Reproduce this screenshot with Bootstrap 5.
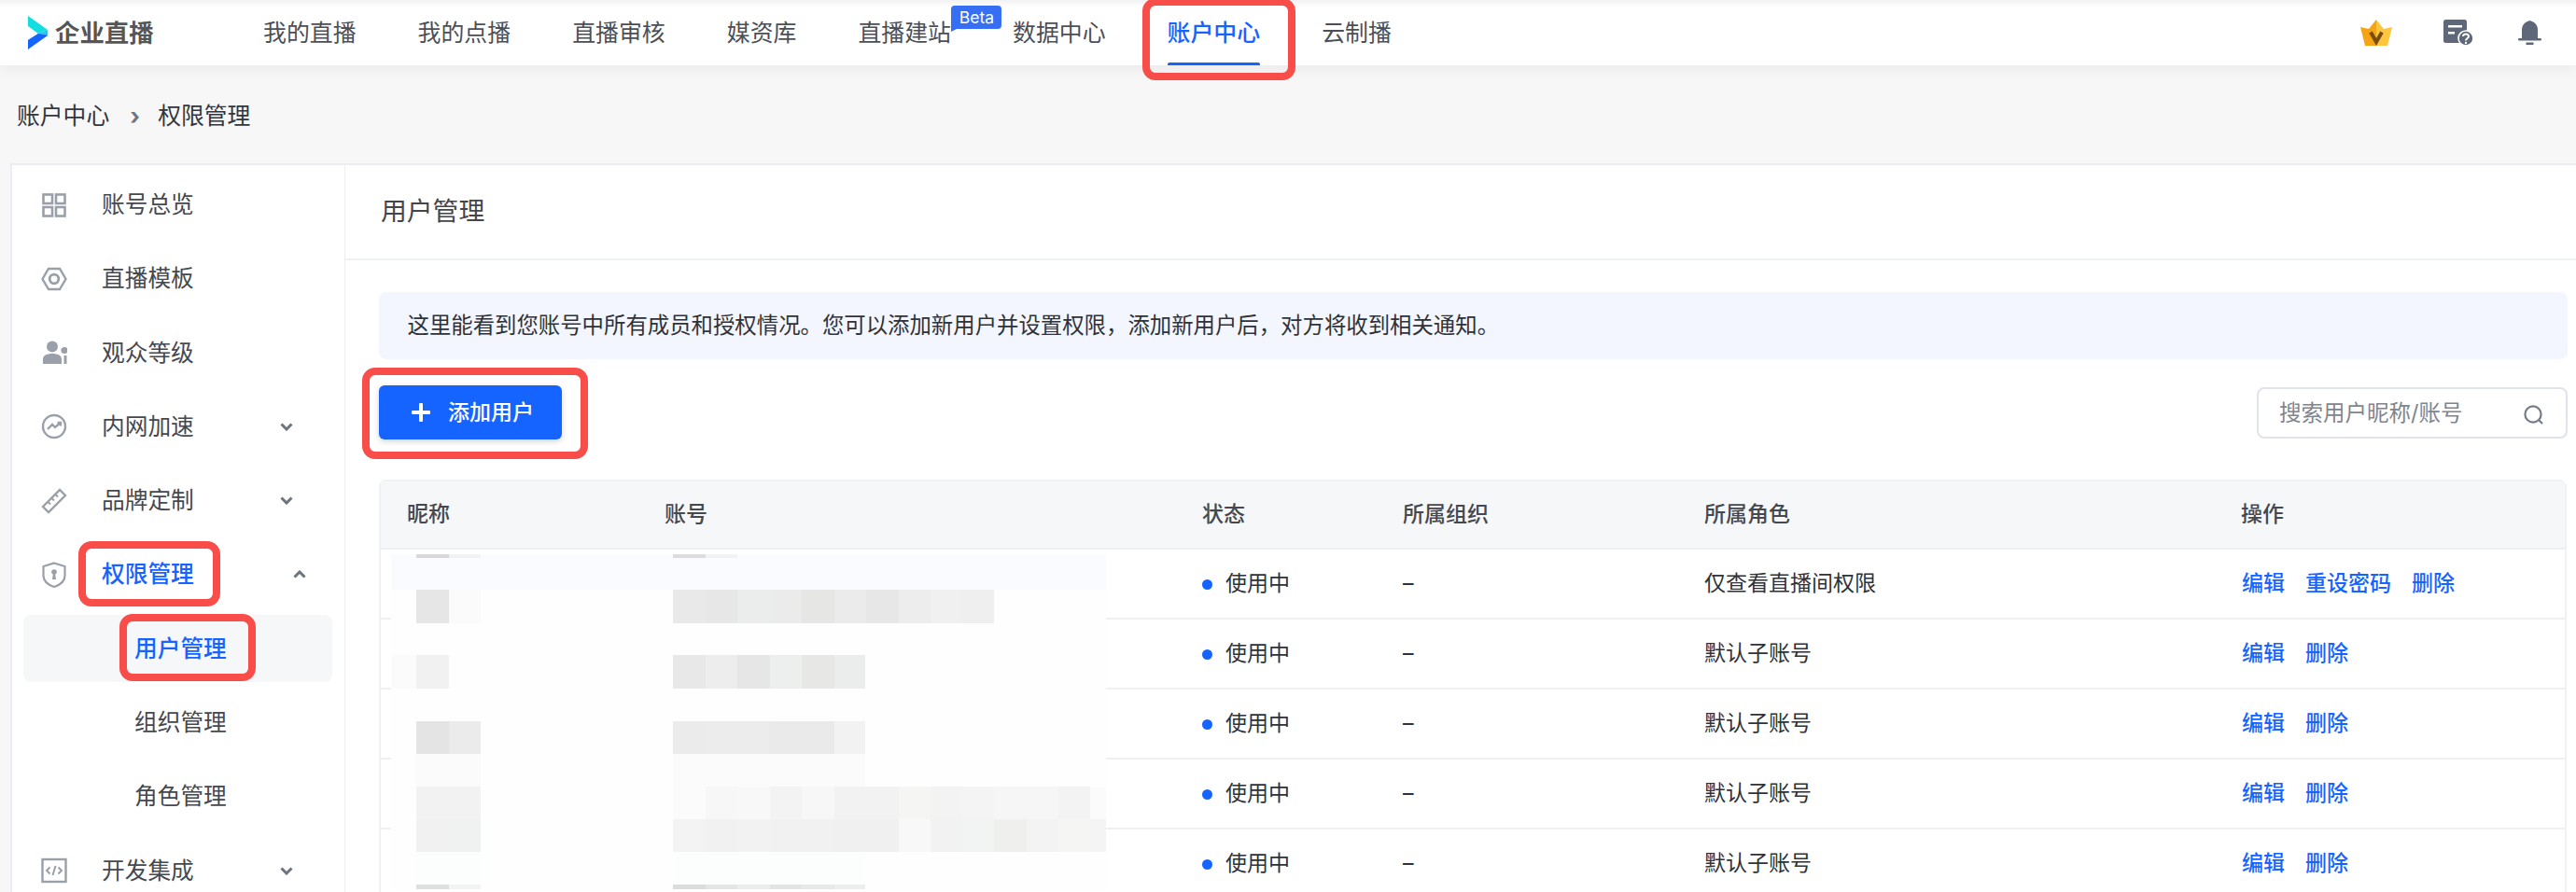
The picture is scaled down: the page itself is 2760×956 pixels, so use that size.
<!doctype html>
<html lang="zh-CN">
<head>
<meta charset="utf-8">
<title>用户管理</title>
<link rel="stylesheet" href="https://cdn.jsdelivr.net/npm/bootstrap@5.3.0/dist/css/bootstrap.min.css">
<style>
html,body{height:956px;overflow:hidden}
body{background:#f7f7f8;font-family:Inter,"Noto Sans CJK SC",sans-serif;color:#3d4046;position:relative}
.topbar{height:70px;background:linear-gradient(#f2f2f2 0,#fff 8px);box-shadow:0 4px 14px rgba(0,0,0,.06);flex-wrap:nowrap;justify-content:flex-start;z-index:2;position:relative}
.brand-box{margin:0 0 0 30px;padding:0;gap:8px;width:252px;font-size:26.4px;font-weight:700;color:#565656;line-height:1}
.top-nav{gap:66px;flex-wrap:nowrap}
.top-link{position:relative;padding:0;font-size:24.9px;line-height:70px;height:70px;color:#4c4f55;white-space:nowrap}
.top-link.on{color:#1664ff;font-weight:500}
.top-link.on::after{content:"";position:absolute;left:0;right:0;bottom:0;height:3px;background:#1664ff;border-radius:2px 2px 0 0}
.beta-tag{position:absolute;left:100px;top:6px;width:54px;height:25px;background:#366ef4;color:#fff;font-size:17.5px;line-height:25px;text-align:center;border-radius:4px 4px 4px 0}
.beta-tag::after{content:"";position:absolute;left:0;top:25px;border-top:3px solid #366ef4;border-right:6px solid transparent}
.top-tools{margin-left:auto;padding-right:37px;gap:48px}
.crown-ico{margin-right:7px}
.crumb-bar{height:105px;padding:4px 0 0 18px;font-size:24.8px}
.crumb-list{margin:0;--bs-breadcrumb-item-padding-x:22px;--bs-breadcrumb-divider-color:#6f7580;--bs-breadcrumb-item-active-color:#33363c;color:#33363c}
.crumb-list .breadcrumb-item+.breadcrumb-item::before{width:8px;padding-right:0;margin-right:22px;font-weight:700}
.shell{height:781px;padding-left:11px}
.side-panel{width:360px;flex:none;background:#fff;border:2px solid #ebecf5;border-bottom:0;padding-top:6.500px;gap:7.300px;flex-wrap:nowrap}
.side-link{height:72px;width:331px;margin-left:12px;padding:0 42px 0 20px;font-size:24.7px;color:#45484e;border-radius:8px;display:flex;align-items:center;flex:none;text-decoration:none}
.side-ico{width:28px;height:28px;flex:none;margin-right:37.500px;margin-left:-1.500px}
.side-chev{margin-left:auto}
.side-link.open{color:#1664ff;font-weight:500;padding-right:28px}
.side-sub{padding-left:119px}
.side-sub.on{background:#f6f7f9;color:#1664ff;font-weight:500}
.main-panel{background:#fff;border-top:2px solid #ebecf5;min-width:0;margin-left:-1px}
.page-head{height:102px;padding-left:38px;border-bottom:2px solid #edf0f7;font-size:27.8px;color:#43464b;font-weight:400;margin:0;display:flex;align-items:center}
.page-body{padding:34px 9px 0 36px}
.tip-box{height:72px;padding:0 0 0 30.500px;margin:0 0 28px;background:#f3f6fe;border:0;border-radius:8px;font-size:23.4px;color:#2f3237;display:flex;align-items:center}
.tool-row{height:58px;margin-bottom:43px}
.add-btn{width:196px;height:58px;padding:0 0 0 35px;background:#1664ff;border:0;border-radius:6px;color:#fff;font-size:23px;font-weight:500;box-shadow:0 2px 6px rgba(0,0,0,.18);display:flex;align-items:center;gap:19px}
.search-box{width:333px;height:55px}
.search-input{height:55px;padding:0 60px 0 22px;border:2px solid #e0e3e9;border-radius:8px;font-size:23.5px;color:#333}
.search-input::placeholder{color:#80858e;opacity:1}
.search-ico{position:absolute;right:25px;top:19px}
.table-wrap{border:2px solid #eff1f4;border-bottom:0;border-radius:8px 8px 0 0;position:relative;width:2344px}
.user-table{--bs-table-bg:transparent;margin:0;table-layout:fixed;width:2340px;font-size:23px;color:#2f3237}
.user-table th{height:72px;padding:0;vertical-align:middle;background:#f6f7f9;font-weight:500;color:#45484e;border-bottom:2px solid #eceef2}
.user-table td{height:75px;padding:0;vertical-align:middle;border-bottom:2px solid #eef0f5}
.user-table .first-col{padding-left:28px}
.w-nick{width:304px}.w-acct{width:576px}.w-state{width:215px}.w-org{width:323px}.w-role{width:575px}.w-act{width:347px}
.dot-on{display:inline-block;width:11px;height:11px;border-radius:50%;background:#1664ff;margin-right:14px;vertical-align:1px}
.act-row{gap:22px;padding-left:1px}
.act-row a{color:#1664ff;font-weight:500;text-decoration:none}
.mosaic{position:absolute;left:11px;top:78px;width:766px;height:359px;filter:blur(.5px)}
.anno{position:absolute;border:8px solid #f94d4a;border-radius:14px;z-index:5;pointer-events:none}
.anno-nav{left:1224px;top:-2px;width:164px;height:88px}
.anno-side{left:84px;top:580px;width:152px;height:70px}
.anno-sub{left:128px;top:658px;width:146px;height:72px}
.anno-add{left:388px;top:394px;width:242px;height:98px}
</style>
</head>
<body>
<nav class="navbar topbar p-0">
  <a class="navbar-brand brand-box d-flex align-items-center" href="#">
    <svg width="21" height="36" viewBox="0 0 21 36"><path d="M0 0 21 15 11 19 0 11Z" fill="#12dde0"/><path d="M21 15V21L6 30 0 26 11 19Z" fill="#38bdf0"/><path d="M0 36V26L11 19 21 21Z" fill="#1664ff"/></svg>
    <span>企业直播</span>
  </a>
  <ul class="nav top-nav">
    <li class="nav-item"><a class="nav-link top-link" href="#">我的直播</a></li>
    <li class="nav-item"><a class="nav-link top-link" href="#">我的点播</a></li>
    <li class="nav-item"><a class="nav-link top-link" href="#">直播审核</a></li>
    <li class="nav-item"><a class="nav-link top-link" href="#">媒资库</a></li>
    <li class="nav-item"><a class="nav-link top-link" href="#">直播建站<span class="beta-tag">Beta</span></a></li>
    <li class="nav-item"><a class="nav-link top-link" href="#">数据中心</a></li>
    <li class="nav-item"><a class="nav-link top-link on" href="#">账户中心</a></li>
    <li class="nav-item"><a class="nav-link top-link" href="#">云制播</a></li>
  </ul>
  <div class="top-tools d-flex align-items-center">
    <svg class="crown-ico" width="34" height="28" viewBox="0 0 34 28"><path d="M17 0 9 10 0 8 5 28H17Z" fill="#f5a415"/><path d="M17 0 25 10 34 8 29 28H17Z" fill="#fdc63f"/><path d="M11 13.500 17 24 23 13.500" fill="none" stroke="#7a4d10" stroke-width="4"/></svg>
    <svg width="32" height="28" viewBox="0 0 32 28"><rect width="25" height="25" rx="2.500" fill="#5e6878"/><rect x="5" y="6" width="15" height="2.500" fill="#fff"/><rect x="5" y="13" width="7" height="2.500" fill="#fff"/><circle cx="24" cy="20" r="8" fill="#5e6878" stroke="#fff" stroke-width="1.600"/><path d="M21 18C21 14.500 27 14.500 27 18 27 20 24 20 24 22.500" fill="none" stroke="#fff" stroke-width="2"/><circle cx="24" cy="25" r="1.200" fill="#fff"/></svg>
    <svg width="25" height="26" viewBox="0 0 25 26"><path d="M12.500 0C7 1.500 4 5 4 10V19H21V10C21 5 18 1.500 12.500 0Z" fill="#5e6878"/><rect y="19" width="25" height="2.500" rx="1.200" fill="#5e6878"/><rect x="8.500" y="23.500" width="8" height="2.500" fill="#5e6878"/></svg>
  </div>
</nav>

<div class="crumb-bar d-flex align-items-center">
  <ol class="breadcrumb crumb-list" style="--bs-breadcrumb-divider:'›'">
    <li class="breadcrumb-item">账户中心</li>
    <li class="breadcrumb-item active">权限管理</li>
  </ol>
</div>

<div class="shell d-flex">
  <aside class="side-panel nav flex-column">
    <a class="side-link" href="#"><svg class="side-ico" viewBox="0 0 28 28" fill="none" stroke="#9aa0a9" stroke-width="2.600"><rect x="2.500" y="2.500" width="9.500" height="9.500"/><rect x="16" y="2.500" width="9.500" height="9.500"/><rect x="2.500" y="16" width="9.500" height="9.500"/><rect x="16" y="16" width="9.500" height="9.500"/></svg>账号总览</a>
    <a class="side-link" href="#"><svg class="side-ico" viewBox="0 0 28 28" fill="none" stroke="#9aa0a9" stroke-width="2.400"><path d="M1.500 14 8 3H20L26.500 14 20 25H8Z"/><circle cx="14" cy="14" r="4.800" stroke-width="2.800"/></svg>直播模板</a>
    <a class="side-link" href="#"><svg class="side-ico" viewBox="0 0 28 28" fill="#9aa0a9"><circle cx="12" cy="7.500" r="6"/><path d="M2 26V21C2 17 6 15 12 15S22 17 22 21V26Z"/><circle cx="25" cy="11.500" r="3.600"/><path d="M24.500 17H27.500V26H24.500Z"/></svg>观众等级</a>
    <a class="side-link" href="#"><svg class="side-ico" viewBox="0 0 28 28" fill="none" stroke="#9aa0a9" stroke-width="2.400"><circle cx="14" cy="14" r="12"/><path d="M7 17 12 12 15 15 21 10M17.500 10H21V13.500"/></svg>内网加速<svg class="side-chev" width="14" height="9" viewBox="0 0 14 9" fill="none" stroke="#6c7480" stroke-width="3"><path d="M1.500 1.500 7 7 12.500 1.500"/></svg></a>
    <a class="side-link" href="#"><svg class="side-ico" viewBox="0 0 28 28" fill="none" stroke="#9aa0a9" stroke-width="2.400"><path d="M2 20 20 2 26 8 8 26Z"/><path d="M7.500 15 10 17.500M11.500 11 14 13.500M15.500 7 18 9.500" stroke-width="2"/></svg>品牌定制<svg class="side-chev" width="14" height="9" viewBox="0 0 14 9" fill="none" stroke="#6c7480" stroke-width="3"><path d="M1.500 1.500 7 7 12.500 1.500"/></svg></a>
    <a class="side-link open" href="#"><svg class="side-ico" viewBox="0 0 28 28" fill="none" stroke="#9aa0a9" stroke-width="2.200"><path d="M14 1.500 25.500 5V15C25.500 21 20 25 14 27 8 25 2.500 21 2.500 15V5Z"/><circle cx="14" cy="11" r="2.800" fill="#9aa0a9" stroke="none"/><path d="M12 19H16L15 12H13Z" fill="#9aa0a9" stroke="none"/></svg>权限管理<svg class="side-chev" width="14" height="9" viewBox="0 0 14 9" fill="none" stroke="#6c7480" stroke-width="3"><path d="M1.500 7.500 7 2 12.500 7.500"/></svg></a>
    <a class="side-link side-sub on" href="#">用户管理</a>
    <a class="side-link side-sub" href="#">组织管理</a>
    <a class="side-link side-sub" href="#">角色管理</a>
    <a class="side-link" href="#"><svg class="side-ico" viewBox="0 0 28 28" fill="none" stroke="#9aa0a9" stroke-width="2.400"><rect x="1.500" y="2" width="25" height="24"/><path d="M9.500 10.500 6 14 9.500 17.500M18.500 10.500 22 14 18.500 17.500M15.500 9 12.500 19" stroke-width="2"/></svg>开发集成<svg class="side-chev" width="14" height="9" viewBox="0 0 14 9" fill="none" stroke="#6c7480" stroke-width="3"><path d="M1.500 1.500 7 7 12.500 1.500"/></svg></a>
  </aside>

  <main class="main-panel flex-grow-1">
    <h1 class="page-head">用户管理</h1>
    <div class="page-body">
      <div class="alert tip-box" role="alert">这里能看到您账号中所有成员和授权情况。您可以添加新用户并设置权限，添加新用户后，对方将收到相关通知。</div>
      <div class="tool-row d-flex justify-content-between align-items-center">
        <button class="btn add-btn" type="button"><svg width="20" height="20" viewBox="0 0 20 20" fill="#fff"><rect x="8" width="4" height="20" rx="1"/><rect y="8" width="20" height="4" rx="1"/></svg>添加用户</button>
        <div class="search-box position-relative">
          <input class="form-control search-input" type="text" placeholder="搜索用户昵称/账号">
          <svg class="search-ico" width="22" height="21" viewBox="0 0 22 21" fill="none" stroke="#757c87" stroke-width="2.200"><circle cx="10" cy="10" r="8.600"/><path d="M16.500 16.500 20 20"/></svg>
        </div>
      </div>
      <div class="table-wrap">
        <table class="table user-table">
          <colgroup><col class="w-nick"><col class="w-acct"><col class="w-state"><col class="w-org"><col class="w-role"><col class="w-act"></colgroup>
          <thead><tr><th class="first-col">昵称</th><th>账号</th><th>状态</th><th>所属组织</th><th>所属角色</th><th>操作</th></tr></thead>
          <tbody>
            <tr><td class="first-col"></td><td></td><td><span class="dot-on"></span>使用中</td><td>–</td><td>仅查看直播间权限</td><td><div class="act-row d-flex"><a href="#">编辑</a><a href="#">重设密码</a><a href="#">删除</a></div></td></tr>
            <tr><td class="first-col"></td><td></td><td><span class="dot-on"></span>使用中</td><td>–</td><td>默认子账号</td><td><div class="act-row d-flex"><a href="#">编辑</a><a href="#">删除</a></div></td></tr>
            <tr><td class="first-col"></td><td></td><td><span class="dot-on"></span>使用中</td><td>–</td><td>默认子账号</td><td><div class="act-row d-flex"><a href="#">编辑</a><a href="#">删除</a></div></td></tr>
            <tr><td class="first-col"></td><td></td><td><span class="dot-on"></span>使用中</td><td>–</td><td>默认子账号</td><td><div class="act-row d-flex"><a href="#">编辑</a><a href="#">删除</a></div></td></tr>
            <tr><td class="first-col"></td><td></td><td><span class="dot-on"></span>使用中</td><td>–</td><td>默认子账号</td><td><div class="act-row d-flex"><a href="#">编辑</a><a href="#">删除</a></div></td></tr>
          </tbody>
        </table>
        <svg class="mosaic" viewBox="420 594 766 359" shape-rendering="crispEdges">
          <rect x="420" y="594" width="766" height="359" fill="#fefefe"/>
          <rect x="420" y="594" width="766" height="38" fill="#fafbfe"/>
          <rect x="447" y="594" width="35" height="4" fill="#d8d8d8"/><rect x="482" y="594" width="34" height="4" fill="#f0f2f5"/><rect x="722" y="594" width="35" height="4" fill="#dcdcdc"/><rect x="757" y="594" width="34" height="4" fill="#f0f2f6"/>
          <g>
            <rect x="447" y="632" width="35" height="36" fill="#e6e6e6"/><rect x="482" y="632" width="34" height="36" fill="#fbfbfb"/>
            <rect x="722" y="632" width="35" height="36" fill="#e9e9e9"/><rect x="757" y="632" width="34" height="36" fill="#e7e7e7"/><rect x="791" y="632" width="35" height="36" fill="#ebecec"/><rect x="826" y="632" width="34" height="36" fill="#ebebeb"/><rect x="860" y="632" width="35" height="36" fill="#e6e6e5"/><rect x="895" y="632" width="34" height="36" fill="#ebebeb"/><rect x="929" y="632" width="35" height="36" fill="#e7e7e7"/><rect x="964" y="632" width="34" height="36" fill="#ededed"/><rect x="998" y="632" width="34" height="36" fill="#f0f0f0"/><rect x="1032" y="632" width="34" height="36" fill="#efefef"/>
          </g>
          <g>
            <rect x="420" y="702" width="27" height="36" fill="#fbfbfb"/><rect x="447" y="702" width="35" height="36" fill="#f1f1f1"/>
            <rect x="722" y="702" width="35" height="36" fill="#e8e8e8"/><rect x="757" y="702" width="34" height="36" fill="#ededed"/><rect x="791" y="702" width="35" height="36" fill="#e6e6e6"/><rect x="826" y="702" width="34" height="36" fill="#edefee"/><rect x="860" y="702" width="35" height="36" fill="#e7e7e6"/><rect x="895" y="702" width="33" height="36" fill="#ebedec"/>
          </g>
          <g>
            <rect x="447" y="773" width="35" height="35" fill="#e4e4e4"/><rect x="482" y="773" width="34" height="35" fill="#ebebeb"/>
            <rect x="722" y="773" width="35" height="35" fill="#ebebeb"/><rect x="757" y="773" width="34" height="35" fill="#ececec"/><rect x="791" y="773" width="35" height="35" fill="#ececec"/><rect x="826" y="773" width="34" height="35" fill="#eaeaea"/><rect x="860" y="773" width="35" height="35" fill="#eaeaea"/><rect x="895" y="773" width="33" height="35" fill="#f2f2f2"/>
          </g>
          <g fill="#fbfbfb">
            <rect x="447" y="808" width="69" height="35"/><rect x="722" y="808" width="206" height="35"/>
          </g>
          <g>
            <rect x="447" y="843" width="35" height="35" fill="#f2f2f2"/><rect x="482" y="843" width="34" height="35" fill="#f1f2f1"/>
            <rect x="722" y="843" width="35" height="35" fill="#fbfbfb"/><rect x="757" y="843" width="34" height="35" fill="#f7f7f7"/><rect x="791" y="843" width="35" height="35" fill="#f8f8f8"/><rect x="826" y="843" width="34" height="35" fill="#f3f3f3"/><rect x="860" y="843" width="35" height="35" fill="#f6f7f6"/><rect x="895" y="843" width="34" height="35" fill="#f2f2f2"/><rect x="929" y="843" width="35" height="35" fill="#f2f2f2"/><rect x="964" y="843" width="34" height="35" fill="#f5f5f3"/><rect x="998" y="843" width="34" height="35" fill="#f3f3f3"/><rect x="1032" y="843" width="34" height="35" fill="#f4f4f4"/><rect x="1066" y="843" width="35" height="35" fill="#f6f6f6"/><rect x="1101" y="843" width="34" height="35" fill="#f6f6f6"/><rect x="1135" y="843" width="34" height="35" fill="#f3f3f3"/><rect x="1169" y="843" width="17" height="35" fill="#fafbfa"/>
          </g>
          <g>
            <rect x="447" y="878" width="35" height="35" fill="#f1f1f1"/><rect x="482" y="878" width="34" height="35" fill="#f0f2f1"/>
            <rect x="722" y="878" width="35" height="35" fill="#f3f3f3"/><rect x="757" y="878" width="34" height="35" fill="#f1f1f1"/><rect x="791" y="878" width="35" height="35" fill="#f2f2f2"/><rect x="826" y="878" width="34" height="35" fill="#f1f1f1"/><rect x="860" y="878" width="35" height="35" fill="#f1f1f1"/><rect x="895" y="878" width="34" height="35" fill="#f0f0f0"/><rect x="929" y="878" width="35" height="35" fill="#f0f0f0"/><rect x="964" y="878" width="34" height="35" fill="#f8f8f8"/><rect x="998" y="878" width="34" height="35" fill="#f2f2f2"/><rect x="1032" y="878" width="34" height="35" fill="#f2f3f3"/><rect x="1066" y="878" width="35" height="35" fill="#efefed"/><rect x="1101" y="878" width="34" height="35" fill="#f3f3f3"/><rect x="1135" y="878" width="34" height="35" fill="#f5f5f3"/><rect x="1169" y="878" width="17" height="35" fill="#f4f4f4"/>
          </g>
          <g fill="#fcfdfd">
            <rect x="447" y="913" width="69" height="35"/><rect x="722" y="913" width="206" height="35"/>
          </g>
          <g>
            <rect x="447" y="948" width="35" height="5" fill="#dfdfdf"/><rect x="482" y="948" width="34" height="5" fill="#f3f3f3"/>
            <rect x="722" y="948" width="35" height="5" fill="#dcdcdc"/><rect x="757" y="948" width="34" height="5" fill="#e5e5e5"/><rect x="791" y="948" width="35" height="5" fill="#ececec"/><rect x="826" y="948" width="34" height="5" fill="#e3e3e3"/><rect x="860" y="948" width="35" height="5" fill="#e8e8e8"/><rect x="895" y="948" width="33" height="5" fill="#ededed"/>
          </g>
        </svg>
      </div>
    </div>
  </main>
</div>

<div class="anno anno-nav"></div>
<div class="anno anno-side"></div>
<div class="anno anno-sub"></div>
<div class="anno anno-add"></div>
<script src="https://cdn.jsdelivr.net/npm/bootstrap@5.3.0/dist/js/bootstrap.bundle.min.js"></script>
</body>
</html>
